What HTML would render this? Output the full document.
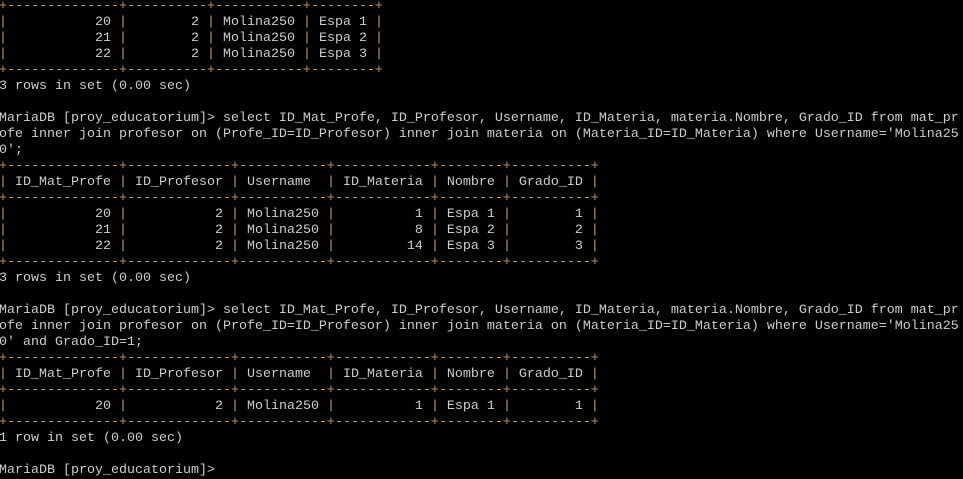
<!DOCTYPE html>
<html><head><meta charset="utf-8"><style>
html,body{margin:0;padding:0;background:#000;width:963px;height:472px;overflow:hidden}
pre{position:absolute;left:-1px;top:-1px;margin:0;font-family:"Liberation Mono",monospace;font-size:13.33px;line-height:16px;color:#cccccc;white-space:pre}
b{font-weight:normal;color:#c89a6a}
</style></head><body>
<pre><b>+--------------+----------+-----------+--------+</b>
<b>|</b>           20 <b>|</b>        2 <b>|</b> Molina250 <b>|</b> Espa 1 <b>|</b>
<b>|</b>           21 <b>|</b>        2 <b>|</b> Molina250 <b>|</b> Espa 2 <b>|</b>
<b>|</b>           22 <b>|</b>        2 <b>|</b> Molina250 <b>|</b> Espa 3 <b>|</b>
<b>+--------------+----------+-----------+--------+</b>
3 rows in set (0.00 sec)

MariaDB [proy_educatorium]&gt; select ID_Mat_Profe, ID_Profesor, Username, ID_Materia, materia.Nombre, Grado_ID from mat_pr
ofe inner join profesor on (Profe_ID=ID_Profesor) inner join materia on (Materia_ID=ID_Materia) where Username='Molina25
0';
<b>+--------------+-------------+-----------+------------+--------+----------+</b>
<b>|</b> ID_Mat_Profe <b>|</b> ID_Profesor <b>|</b> Username  <b>|</b> ID_Materia <b>|</b> Nombre <b>|</b> Grado_ID <b>|</b>
<b>+--------------+-------------+-----------+------------+--------+----------+</b>
<b>|</b>           20 <b>|</b>           2 <b>|</b> Molina250 <b>|</b>          1 <b>|</b> Espa 1 <b>|</b>        1 <b>|</b>
<b>|</b>           21 <b>|</b>           2 <b>|</b> Molina250 <b>|</b>          8 <b>|</b> Espa 2 <b>|</b>        2 <b>|</b>
<b>|</b>           22 <b>|</b>           2 <b>|</b> Molina250 <b>|</b>         14 <b>|</b> Espa 3 <b>|</b>        3 <b>|</b>
<b>+--------------+-------------+-----------+------------+--------+----------+</b>
3 rows in set (0.00 sec)

MariaDB [proy_educatorium]&gt; select ID_Mat_Profe, ID_Profesor, Username, ID_Materia, materia.Nombre, Grado_ID from mat_pr
ofe inner join profesor on (Profe_ID=ID_Profesor) inner join materia on (Materia_ID=ID_Materia) where Username='Molina25
0' and Grado_ID=1;
<b>+--------------+-------------+-----------+------------+--------+----------+</b>
<b>|</b> ID_Mat_Profe <b>|</b> ID_Profesor <b>|</b> Username  <b>|</b> ID_Materia <b>|</b> Nombre <b>|</b> Grado_ID <b>|</b>
<b>+--------------+-------------+-----------+------------+--------+----------+</b>
<b>|</b>           20 <b>|</b>           2 <b>|</b> Molina250 <b>|</b>          1 <b>|</b> Espa 1 <b>|</b>        1 <b>|</b>
<b>+--------------+-------------+-----------+------------+--------+----------+</b>
1 row in set (0.00 sec)

MariaDB [proy_educatorium]&gt;</pre>
</body></html>
